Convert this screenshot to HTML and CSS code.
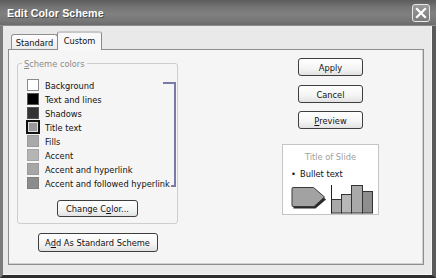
FILE: index.html
```html
<!DOCTYPE html>
<html>
<head>
<meta charset="utf-8">
<link rel="stylesheet" href="styles.css">
</head>
<body>
<div class="window">
  <div class="titlebar">
    <span class="title">Edit Color Scheme</span>
    <span class="close"><svg width="16" height="16" viewBox="0 0 16 16"><path d="M4 4 L12 12 M12 4 L4 12" stroke="#fff" stroke-width="2.2" stroke-linecap="square"/></svg></span>
  </div>
  <div class="frame">
    <div class="tabs">
      <div class="tab">Standard</div>
      <div class="tab active">Custom</div>
    </div>
    <div class="panel">
      <div class="left">
        <fieldset class="group">
          <legend><u>S</u>cheme colors</legend>
          <div class="rows">
            <div class="row"><span class="sw c1"></span>Background</div>
            <div class="row"><span class="sw c2"></span>Text and lines</div>
            <div class="row"><span class="sw c3"></span>Shadows</div>
            <div class="row"><span class="sw c4 sel"></span>Title text</div>
            <div class="row"><span class="sw c5"></span>Fills</div>
            <div class="row"><span class="sw c6"></span>Accent</div>
            <div class="row"><span class="sw c7"></span>Accent and hyperlink</div>
            <div class="row"><span class="sw c8"></span>Accent and followed hyperlink</div>
            <div class="bracket"></div>
          </div>
          <button class="btn change">Change C<u>o</u>lor...</button>
        </fieldset>
        <button class="btn add">A<u>d</u>d As Standard Scheme</button>
      </div>
      <div class="right">
        <button class="btn side">Apply</button>
        <button class="btn side cancel">Cancel</button>
        <button class="btn side preview-btn"><u>P</u>review</button>
        <div class="preview">
          <div class="ptitle">Title of Slide</div>
          <div class="pbullet"><span class="dot">•</span>Bullet text</div>
          <svg class="pgraph" width="82" height="30" viewBox="0 0 82 30">
            <path d="M2.5 5 L23.5 5 L35 15.5 L24.5 24.5 L2.5 24.5 Z" fill="#2a2a2a"/>
            <path d="M2 3.5 Q1 3.5 1 5 L1 21 Q1 22.5 2 22.5 L23 22.5 L33.5 13 L22.5 3.5 Z" fill="#a2a2a2" stroke="#3a3a3a" stroke-width="1"/>
            <rect x="40.5" y="15.5" width="10" height="13.5" fill="#a9a9a9" stroke="#333"/>
            <rect x="50.5" y="10.5" width="10" height="18.5" fill="#b7b7b7" stroke="#333"/>
            <rect x="60.5" y="1.5" width="11" height="27.5" fill="#a9a9a9" stroke="#333"/>
            <rect x="71.5" y="7.5" width="10" height="21.5" fill="#8e8e8e" stroke="#333"/>
            <path d="M40.5 1 L40.5 29.5" stroke="#222" stroke-width="1"/>
          </svg>
        </div>
      </div>
    </div>
  </div>
</div>
</body>
</html>
```

FILE: styles.css
```css
* { box-sizing: border-box; }
html, body { margin: 0; padding: 0; }
body {
  width: 436px;
  height: 278px;
  overflow: hidden;
  font-family: "DejaVu Sans Condensed", "DejaVu Sans", sans-serif;
  font-size: 9.2px;
  color: #111;
}
.window {
  width: 436px;
  height: 278px;
  display: flex;
  flex-direction: column;
  background: #e8e8e8;
}
.titlebar {
  height: 26px;
  flex: none;
  display: flex;
  align-items: center;
  padding: 0 6px 0 7px;
  background: linear-gradient(#5c5c5c 0%, #727272 25%, #808080 55%, #767676 85%, #6a6a6a 100%);
  border-bottom: 1px solid #8e8e8e;
}
.title {
  font-family: "Liberation Sans", Arial, sans-serif;
  font-weight: bold;
  font-size: 10.7px;
  color: #fff;
  text-shadow: 1px 1px 0 #4a4a4a;
  letter-spacing: 0.1px;
}
.close {
  margin-left: auto;
  width: 18px;
  height: 18px;
  border: 1px solid #e8e8e8;
  border-radius: 3px;
  background: linear-gradient(#9a9a9a, #7c7c7c);
  display: flex;
  align-items: center;
  justify-content: center;
}
.close svg { display: block; }
.frame {
  flex: 1;
  display: flex;
  flex-direction: column;
  border-left: 3px solid #7c7c7c;
  border-right: 4px solid #5a5a5a;
  border-bottom: 3px solid #2c2c2c;
  padding: 5px 8px 9px 5px;
  background: #e9e9e9;
  box-shadow: inset -1px -1px 0 #f6f6f6;
}
.tabs {
  height: 18px;
  display: flex;
  align-items: flex-end;
  margin-left: 3px;
  position: relative;
  z-index: 1;
}
.tab {
  height: 15px;
  width: 47px;
  border: 1px solid #8f8f8f;
  border-bottom: none;
  border-radius: 3px 3px 0 0;
  background: linear-gradient(#fefefe, #ececec);
  display: flex;
  align-items: center;
  justify-content: center;
  padding-top: 1px;
}
.tab.active {
  height: 19px;
  width: 45px;
  margin-bottom: -1px;
  margin-left: -1px;
  background: #f8f8f8;
  border-color: #8a8a8a;
  border-top: 2px solid #c8c8c8;
  align-items: flex-start;
  padding-top: 2px;
}
.panel {
  height: 216px;
  display: flex;
  border: 1px solid #8e8e8e;
  background: #f5f5f5;
  padding: 8px 0 0 8px;
  box-shadow: inset -1px -1px 0 #d0d0d0;
}
.left {
  width: 161px;
  display: flex;
  flex-direction: column;
  align-items: center;
}
.group {
  width: 161px;
  margin: 0;
  padding: 0 0 6px 0;
  border: 1px solid #cecece;
  border-radius: 3px;
  display: flex;
  flex-direction: column;
  min-width: 0;
}
.group legend {
  margin-left: 4px;
  padding: 0 2px;
  line-height: 11px;
  color: #8a8a8a;
}
.rows {
  position: relative;
  margin: 9px 0 0 9px;
  display: flex;
  flex-direction: column;
}
.row {
  height: 14px;
  display: flex;
  align-items: center;
  gap: 6px;
  white-space: nowrap;
}
.sw {
  width: 12px;
  height: 12px;
  border: 1px solid #555;
  flex: none;
}
.sw.sel {
  width: 14px;
  height: 14px;
  margin: 0 -1px 0 -1px;
  border: 2px solid #111;
  box-shadow: inset 0 0 0 1px #e0e0e0;
}
.c1 { background: #ffffff; border-color: #8a8a8a; }
.c2 { background: #000000; }
.c3 { background: #333333; }
.c4 { background: #9a9a9a; }
.c5 { background: #a9a9a9; border-color: #9a9a9a; }
.c6 { background: #b5b5b5; border-color: #a5a5a5; }
.c7 { background: #a6a6a6; border-color: #999; }
.c8 { background: #8c8c8c; border-color: #808080; }
.bracket {
  position: absolute;
  left: 136px;
  top: 4px;
  width: 13px;
  height: 105px;
  border-top: 2px solid #7a7aa6;
  border-right: 2px solid #7a7aa6;
}
.bracket::after {
  content: "";
  position: absolute;
  right: -2px;
  bottom: 0;
  width: 5px;
  border-bottom: 2px solid #7a7aa6;
}
.btn {
  font: inherit;
  color: #111;
  margin: 0;
  padding: 0;
  border: 1px solid #3e3e3e;
  border-radius: 3px;
  background: linear-gradient(#ffffff 0%, #f4f4f4 60%, #e2e2e2 100%);
  display: flex;
  align-items: center;
  justify-content: center;
  white-space: nowrap;
}
.change {
  align-self: center;
  margin-top: 10px;
  width: 81px;
  height: 17px;
}
.add {
  margin-top: 9px;
  width: 120px;
  height: 19px;
}
.right {
  width: 97px;
  margin-left: 104px;
  display: flex;
  flex-direction: column;
  align-items: center;
}
.side {
  width: 65px;
  height: 18px;
}
.cancel { margin-top: 9px; }
.preview-btn { margin-top: 8px; }
.preview {
  margin-top: 15px;
  width: 97px;
  height: 71px;
  border: 1px solid #c4c4c4;
  background: #fff;
  display: flex;
  flex-direction: column;
  padding-top: 6px;
}
.ptitle {
  text-align: center;
  color: #a0a0a0;
  line-height: 12px;
}
.pbullet {
  margin-top: 5px;
  line-height: 12px;
  padding-left: 8px;
  display: flex;
  color: #111;
}
.dot { width: 9px; }
.pgraph {
  display: block;
  margin: 4px 0 0 8px;
}
```
